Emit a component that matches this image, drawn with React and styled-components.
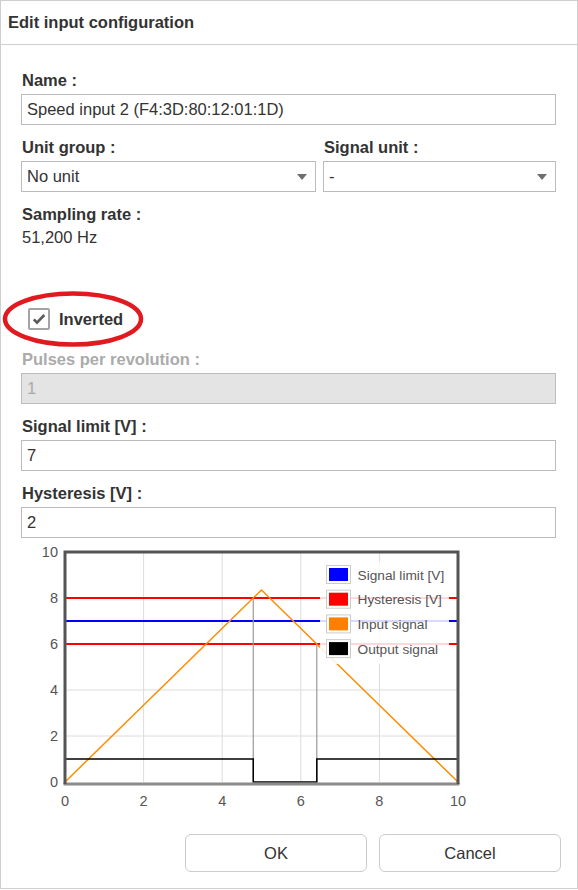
import React from "react";
import styled, { createGlobalStyle } from "styled-components";

const Global = createGlobalStyle`
  html, body { margin: 0; padding: 0; background: #fff; }
  body { font-family: "Liberation Sans", Arial, sans-serif; color: #333; }
  * { box-sizing: border-box; }
`;

const Dialog = styled.div`
  width: 578px;
  height: 889px;
  border: 1px solid #cfcfcf;
  display: flex;
  flex-direction: column;
  background: #fff;
`;

const Header = styled.div`
  height: 44px;
  border-bottom: 1px solid #cfcfcf;
  display: flex;
  align-items: center;
  padding: 0 7px;
  font-weight: bold;
  font-size: 16.5px;
  color: #333;
`;

const Body = styled.div`
  padding: 25px 21px 0 20px;
  display: flex;
  flex-direction: column;
`;

const Field = styled.div`
  display: flex;
  flex-direction: column;
  margin-top: ${(p) => p.$mt ?? 12}px;
`;

const Label = styled.div`
  font-size: 16.5px;
  line-height: 20px;
  font-weight: bold;
  color: ${(p) => (p.$disabled ? "#ababab" : "#333")};
  margin-bottom: 4px;
  padding-left: 1px;
`;

const TextInput = styled.div`
  height: 31px;
  border: 1px solid #bcbcbc;
  background: ${(p) => (p.$disabled ? "#e4e4e4" : "#fff")};
  color: ${(p) => (p.$disabled ? "#a9a9a9" : "#333")};
  font-size: 16.5px;
  display: flex;
  align-items: center;
  padding: 0 5px;
`;

const SelectRow = styled.div`
  display: grid;
  grid-template-columns: 295px 1fr;
  column-gap: 7px;
  margin-top: 12px;
`;

const SelectBox = styled(TextInput)`
  justify-content: space-between;
  padding-right: 8px;
`;

const Caret = styled.span`
  width: 0;
  height: 0;
  border-left: 5px solid transparent;
  border-right: 5px solid transparent;
  border-top: 6px solid #6e6e6e;
`;

const Value = styled.div`
  font-size: 16.5px;
  line-height: 20px;
  color: #333;
  margin-top: -1px;
  padding-left: 1px;
`;

const CheckRow = styled.div`
  position: relative;
  display: flex;
  align-items: center;
  gap: 9px;
  height: 22px;
  margin-top: 61px;
  padding-left: 7px;
`;

const CheckBox = styled.span`
  width: 22px;
  height: 22px;
  border: 2px solid #a3a3a3;
  border-radius: 2px;
  display: flex;
  align-items: center;
  justify-content: center;
  background: #fff;
`;

const CheckLabel = styled.span`
  font-size: 16.5px;
  font-weight: bold;
  color: #333;
`;

const Annotation = styled.svg`
  position: absolute;
  left: -18px;
  top: -17px;
  overflow: visible;
  pointer-events: none;
`;

const Chart = styled.svg`
  display: block;
  margin-top: 3px;
  font-family: "Liberation Sans", Arial, sans-serif;
`;

const Footer = styled.div`
  display: flex;
  justify-content: flex-end;
  gap: 12px;
  padding-right: 16px;
  margin-top: 18px;
`;

const Button = styled.button`
  width: 182px;
  height: 38px;
  border: 1px solid #cccccc;
  border-radius: 6px;
  background: #fff;
  font-family: "Liberation Sans", Arial, sans-serif;
  font-size: 16.5px;
  color: #333;
`;

const L = 44, R = 437, T = 11, B = 241;
const xs = (v) => L + (v * (R - L)) / 10;
const ys = (v) => B - (v * (B - T)) / 10;

const legend = [
  { c: "#0000ff", t: "Signal limit [V]" },
  { c: "#ff0000", t: "Hysteresis [V]" },
  { c: "#ff8000", t: "Input signal" },
  { c: "#000000", t: "Output signal" },
];

function SignalChart() {
  const peak = 8.35;
  const x1 = (8 / peak) * 5;
  const x2 = 5 + ((peak - 6) / peak) * 5;
  return (
    <Chart width="470" height="275" viewBox="0 0 470 275">
      {[2, 4, 6, 8].map((v) => (
        <line key={"gx" + v} x1={xs(v)} x2={xs(v)} y1={T} y2={B} stroke="#dcdcdc" strokeWidth="1" />
      ))}
      {[2, 4, 6, 8].map((v) => (
        <line key={"gy" + v} x1={L} x2={R} y1={ys(v)} y2={ys(v)} stroke="#dcdcdc" strokeWidth="1" />
      ))}
      <line x1={L} x2={R} y1={ys(8)} y2={ys(8)} stroke="#ff0000" strokeWidth="1.8" />
      <line x1={L} x2={R} y1={ys(7)} y2={ys(7)} stroke="#0000ff" strokeWidth="1.8" />
      <line x1={L} x2={R} y1={ys(6)} y2={ys(6)} stroke="#ff0000" strokeWidth="1.8" />
      <line x1={xs(x1)} x2={xs(x1)} y1={ys(8)} y2={ys(0)} stroke="#999" strokeWidth="1.2" />
      <line x1={xs(x2)} x2={xs(x2)} y1={ys(6)} y2={ys(0)} stroke="#999" strokeWidth="1.2" />
      <polyline
        points={`${xs(0)},${ys(0)} ${xs(5)},${ys(peak)} ${xs(10)},${ys(0)}`}
        fill="none"
        stroke="#ff8c00"
        strokeWidth="1.5"
      />
      <polyline
        points={`${xs(0)},${ys(1)} ${xs(x1)},${ys(1)} ${xs(x1)},${ys(0)} ${xs(x2)},${ys(0)} ${xs(x2)},${ys(1)} ${xs(10)},${ys(1)}`}
        fill="none"
        stroke="#000"
        strokeWidth="1.5"
      />
      <line x1={L - 1.5} x2={R + 1.5} y1={B + 2} y2={B + 2} stroke="#8a8a8a" strokeWidth="3" />
      <polyline
        points={`${L},${B + 2} ${L},${T} ${R},${T} ${R},${B + 2}`}
        fill="none"
        stroke="#545454"
        strokeWidth="3"
      />
      <rect x="299" y="21" width="129" height="102" fill="#fff" fillOpacity="0.85" />
      {legend.map((l, i) => {
        const y = 24 + i * 24.7;
        return (
          <g key={l.t}>
            <rect x="305.5" y={y + 0.5} width="24" height="18" fill="#fff" stroke="#cccccc" strokeWidth="1" />
            <rect x="308" y={y + 3} width="19" height="13" fill={l.c} />
            <text x="336.5" y={y + 14.5} fontSize="13.7" fill="#545454">
              {l.t}
            </text>
          </g>
        );
      })}
      {[0, 2, 4, 6, 8, 10].map((v) => (
        <text key={"ty" + v} x="37" y={ys(v) + 5} fontSize="14.5" fill="#555" textAnchor="end">
          {v}
        </text>
      ))}
      {[0, 2, 4, 6, 8, 10].map((v) => (
        <text key={"tx" + v} x={xs(v)} y="265" fontSize="14.5" fill="#555" textAnchor="middle">
          {v}
        </text>
      ))}
    </Chart>
  );
}

export default function App() {
  return (
    <>
      <Global />
      <Dialog>
        <Header>Edit input configuration</Header>
        <Body>
          <Field $mt={0}>
            <Label>Name :</Label>
            <TextInput>Speed input 2 (F4:3D:80:12:01:1D)</TextInput>
          </Field>
          <SelectRow>
            <Field $mt={0}>
              <Label>Unit group :</Label>
              <SelectBox>
                <span>No unit</span>
                <Caret />
              </SelectBox>
            </Field>
            <Field $mt={0}>
              <Label>Signal unit :</Label>
              <SelectBox>
                <span>-</span>
                <Caret />
              </SelectBox>
            </Field>
          </SelectRow>
          <Field>
            <Label>Sampling rate :</Label>
            <Value>51,200 Hz</Value>
          </Field>
          <CheckRow>
            <CheckBox>
              <svg width="14" height="12" viewBox="0 0 14 12">
                <path d="M1.8 6.3 L5 9.6 L12.3 2" fill="none" stroke="#5a5a5a" strokeWidth="2.6" strokeLinejoin="miter" />
              </svg>
            </CheckBox>
            <CheckLabel>Inverted</CheckLabel>
            <Annotation width="142" height="56" viewBox="0 0 142 56">
              <ellipse cx="70" cy="28" rx="68" ry="25.5" fill="none" stroke="#e01a1f" strokeWidth="4.5" />
            </Annotation>
          </CheckRow>
          <Field $mt={19}>
            <Label $disabled>Pulses per revolution :</Label>
            <TextInput $disabled>1</TextInput>
          </Field>
          <Field>
            <Label>Signal limit [V] :</Label>
            <TextInput>7</TextInput>
          </Field>
          <Field>
            <Label>Hysteresis [V] :</Label>
            <TextInput>2</TextInput>
          </Field>
          <SignalChart />
        </Body>
        <Footer>
          <Button>OK</Button>
          <Button>Cancel</Button>
        </Footer>
      </Dialog>
    </>
  );
}
